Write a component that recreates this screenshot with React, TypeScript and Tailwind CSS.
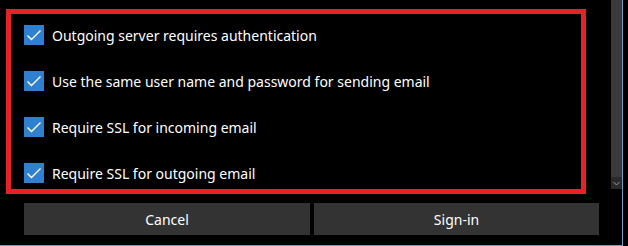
import React from 'react'

const options = [
  'Outgoing server requires authentication',
  'Use the same user name and password for sending email',
  'Require SSL for incoming email',
  'Require SSL for outgoing email',
]

const CheckBox: React.FC = () => (
  <div className="w-[20px] h-[20px] shrink-0 bg-[#2f80d1]">
    <svg width="20" height="20" viewBox="0 0 20 20" fill="none">
      <path d="M3.5 10.5 L7.5 14.5 L16.5 5.5" stroke="white" strokeWidth="1.4" />
    </svg>
  </div>
)

export default function App() {
  return (
    <div
      className="w-[628px] h-[246px] bg-black flex flex-col overflow-hidden text-white"
      style={{ fontFamily: '"Noto Sans", "Open Sans", sans-serif' }}>
      <div className="flex h-[245px]">
        {/* Scroll area */}
        <div className="w-[611px] shrink-0 flex flex-col">
          <div className="ml-[6px] mt-[9px] w-[580px] h-[185px] border-[5px] border-[#e8202a] pl-[13px] pt-[11px] flex flex-col gap-[26px]">
            {options.map((label) => (
              <div className="flex items-center h-[20px]" key={label}>
                <CheckBox />
                <span className="ml-[8px] mt-px text-[14px] leading-[20px] whitespace-nowrap">{label}</span>
              </div>
            ))}
          </div>

          {/* Buttons */}
          <div className="flex gap-[4px] ml-[24px] mt-[9px]">
            <div className="w-[286px] h-[32px] bg-[#333333] flex items-center justify-center text-[14px]">Cancel</div>
            <div className="w-[285px] h-[32px] bg-[#333333] flex items-center justify-center text-[14px]">Sign-in</div>
          </div>
        </div>

        {/* Scrollbar */}
        <div className="w-[11px] shrink-0 flex flex-col">
          <div className="h-[177px] bg-[#3a3a3a]"></div>
          <div className="h-[12px] bg-[#2a2a2a] flex items-center justify-center">
            <svg width="7" height="5" viewBox="0 0 7 5" fill="none">
              <path d="M0.5 1 L3.5 4 L6.5 1" stroke="#9a9a9a" strokeWidth="1" />
            </svg>
          </div>
        </div>
        <div className="w-px bg-[#6f9fc9]"></div>
      </div>
      <div className="h-px w-[623px] bg-[#6f9fc9]"></div>
    </div>
  )
}
